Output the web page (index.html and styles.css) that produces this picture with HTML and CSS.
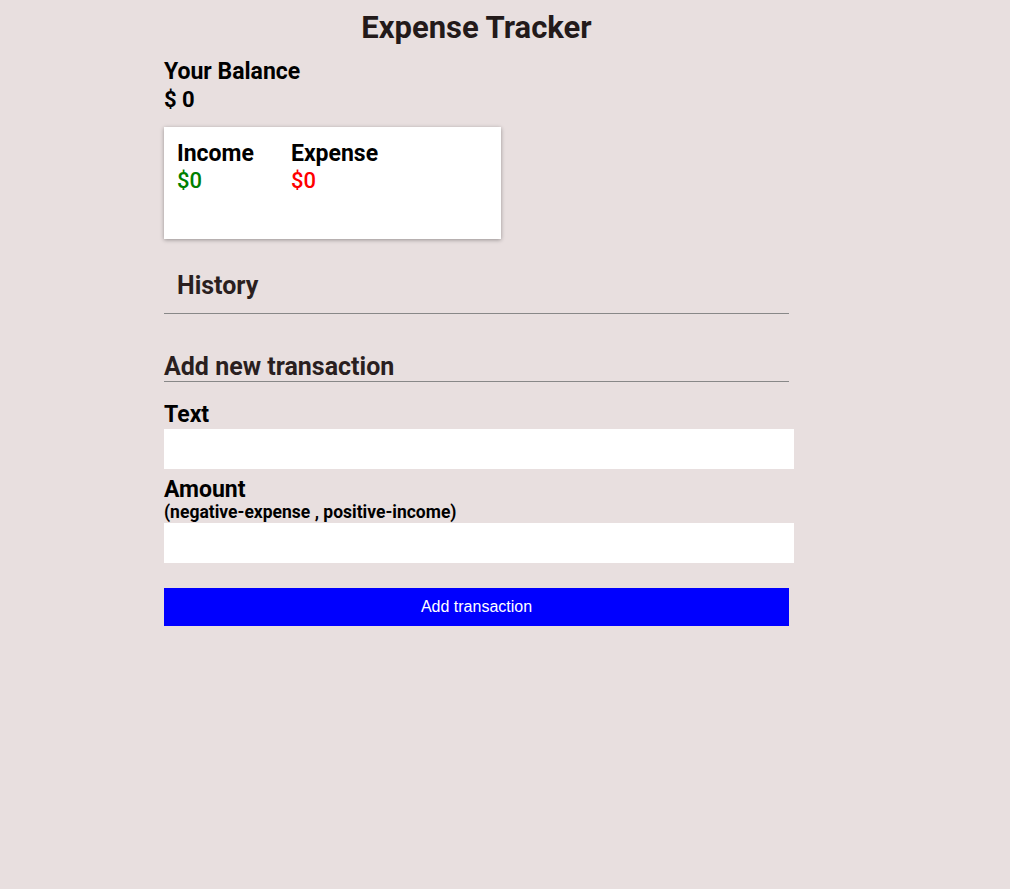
FILE: index.html
```html
<!DOCTYPE html>
<html>
<head>
<meta charset="utf-8">
<title>Expense Tracker</title>
<link rel="stylesheet" href="styles.css">
</head>
<body>
<div class="container">
  <h1 class="title">Expense Tracker</h1>
  <div class="balance">
    <h4 class="balance-label">Your Balance</h4>
    <div class="balance-value">$ 0</div>
  </div>
  <div class="card">
    <div class="col">
      <div class="col-label">Income</div>
      <div class="money plus">$0</div>
    </div>
    <div class="col">
      <div class="col-label">Expense</div>
      <div class="money minus">$0</div>
    </div>
  </div>
  <h3 class="history">History</h3>
  <ul class="list"></ul>
  <h3 class="add-title">Add new transaction</h3>
  <form class="form">
    <label class="label">Text</label>
    <input class="field" type="text">
    <label class="label label-amount">Amount</label>
    <div class="hint">(negative-expense , positive-income)</div>
    <input class="field" type="text">
    <button class="btn" type="button">Add transaction</button>
  </form>
</div>
</body>
</html>
```
FILE: styles.css
```css
* { box-sizing: border-box; }
html, body { margin: 0; padding: 0; }
body {
  background: #e8dfdf;
  font-family: Roboto, "Liberation Sans", sans-serif;
  color: #000;
}
.container {
  width: 625px;
  margin-left: 164px;
}
.title {
  margin: 0;
  padding-top: 9px;
  height: 58px;
  text-align: center;
  font-size: 31px;
  font-weight: 700;
  color: #231a1a;
  line-height: 38px;
}
.balance-label {
  margin: 0;
  font-size: 23px;
  line-height: 28px;
  font-weight: 700;
}
.balance-value {
  font-size: 22px;
  line-height: 28px;
  font-weight: 700;
}
.card {
  margin-top: 13px;
  width: 337px;
  height: 112px;
  background: #fff;
  box-shadow: 0 1px 4px rgba(0,0,0,0.35);
  display: flex;
  gap: 37px;
  padding: 13px 13px;
}
.col-label {
  font-size: 23px;
  font-weight: 700;
  line-height: 28px;
}
.money {
  font-size: 22px;
  font-weight: 500;
  line-height: 26px;
}
.plus { color: #008000; }
.minus { color: #ff0000; }
.history {
  margin: 30px 0 0;
  padding: 1px 13px 11px;
  font-size: 25px;
  line-height: 32px;
  font-weight: 700;
  color: #2a1f1f;
  border-bottom: 1px solid #888;
}
.list { margin: 0; padding: 0; height: 37px; list-style: none; }
.add-title {
  margin: 0;
  padding-top: 1px;
  font-size: 25px;
  line-height: 29px;
  font-weight: 700;
  color: #2a1f1f;
  border-bottom: 1px solid #888;
}
.form { display: flex; flex-direction: column; padding-top: 19px; }
.label {
  font-size: 23px;
  font-weight: 700;
  line-height: 28px;
}
.label-amount { margin-top: 7px; }
.hint {
  font-size: 17.5px;
  font-weight: 700;
  line-height: 16px;
  margin-bottom: 3px;
}
.field {
  width: 630px;
  height: 40px;
  border: none;
  background: #fff;
  margin: 0;
}
.btn {
  margin-top: 25px;
  width: 625px;
  height: 38px;
  border: none;
  background: #0000ff;
  color: #fff;
  font-family: "Liberation Sans", Arial, sans-serif;
  font-size: 16px;
  font-weight: 400;
}
```
